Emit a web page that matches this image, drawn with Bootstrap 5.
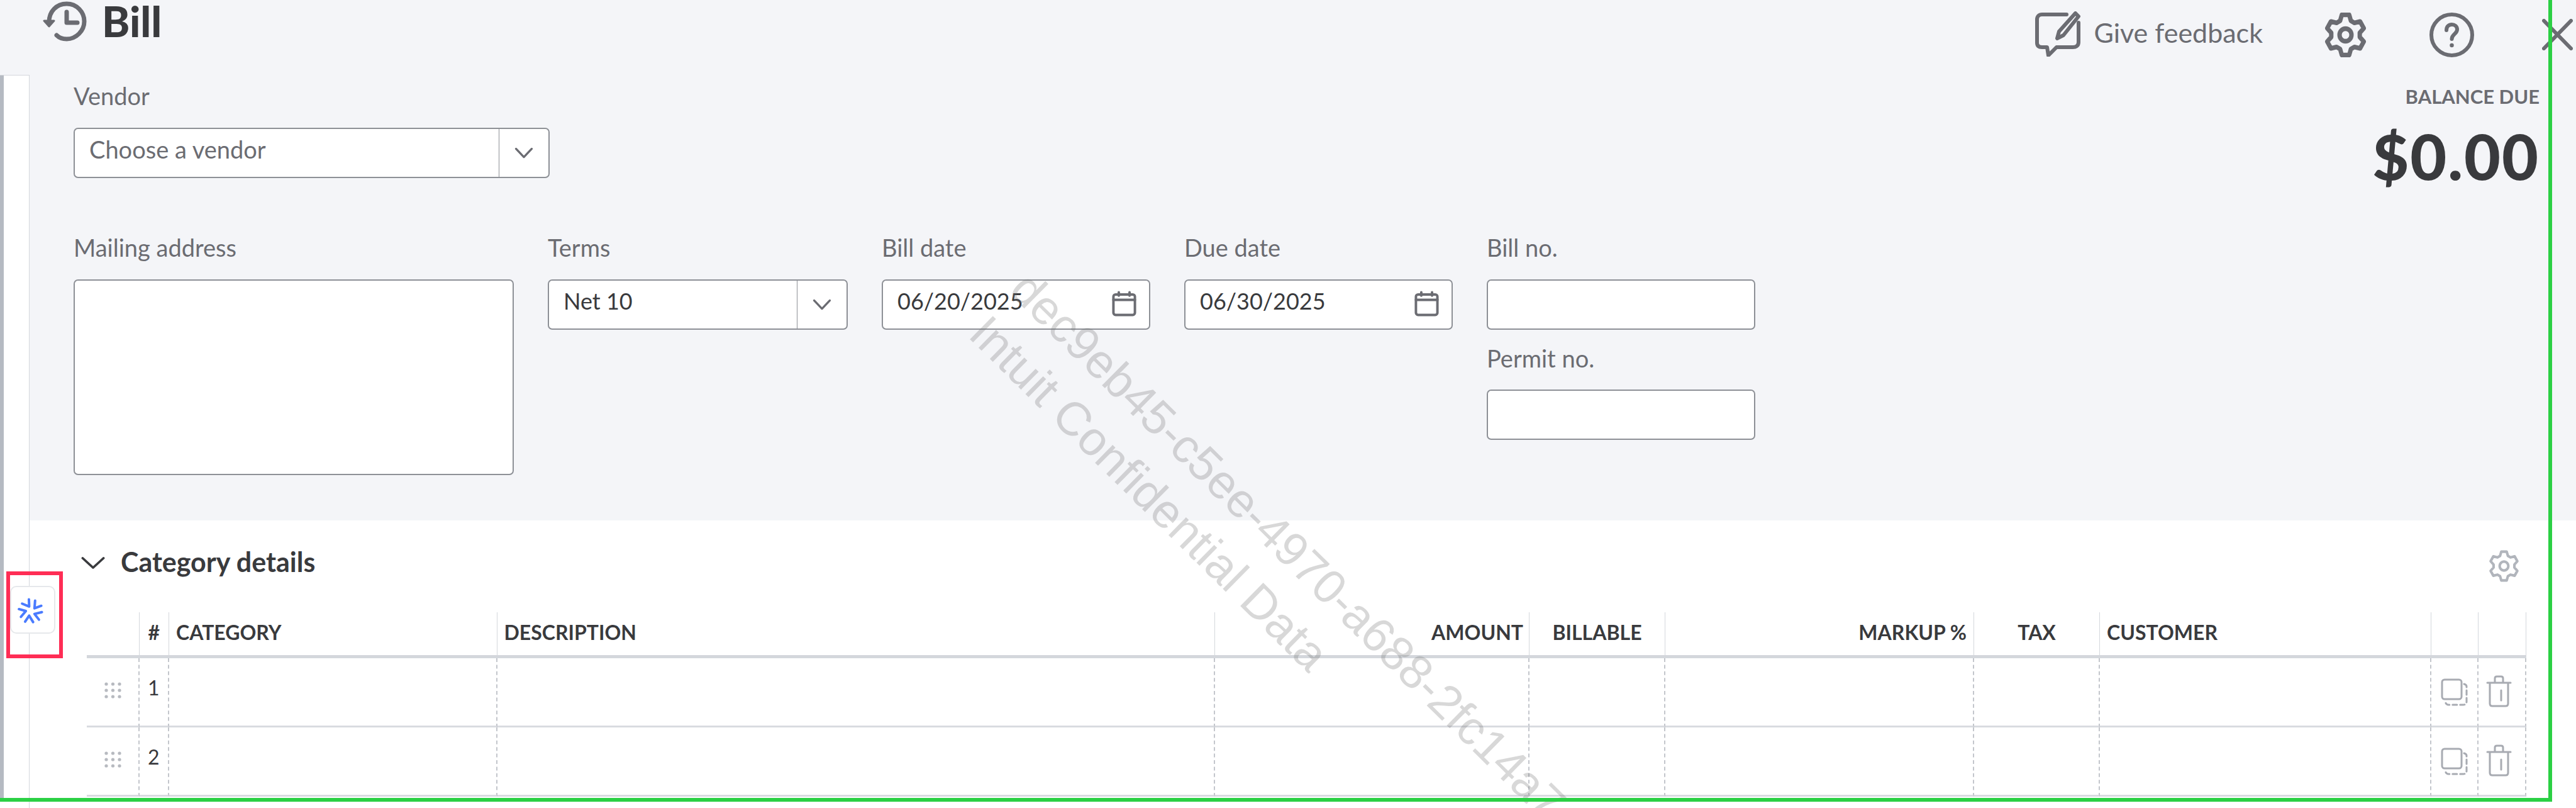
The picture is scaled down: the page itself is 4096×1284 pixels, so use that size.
<!doctype html>
<html lang="en">
<head>
<meta charset="utf-8">
<title>Bill</title>
<link href="https://cdn.jsdelivr.net/npm/bootstrap@5.3.0/dist/css/bootstrap.min.css" rel="stylesheet">
<style>
html,body{width:4096px;height:1284px;overflow:hidden;background:#fff}
body{font-family:"Lato","Liberation Sans",sans-serif;color:#393a3d;position:relative}
.ico{display:block;flex:none;fill:none;stroke:currentColor;stroke-linecap:round;stroke-linejoin:round}
.g6{color:#6b6c72}
.top-head{height:119px;background:#f4f5f8;padding-left:67px;padding-right:5px}
.i-hist{width:71px;height:64px;margin-top:2px}
.bill-title{font-size:67px;line-height:63px;font-weight:900;margin:2px 0 0 24px;color:#393a3d}
.i-fb{width:72px;height:72px;margin-top:18px}
.fb-text{font-size:43px;line-height:43px;margin:30px 98px 0 21px;color:#6b6c72}
.i-gear{width:67px;height:71px;margin-top:20px}
.i-help{width:71px;height:71px;margin:20px 108px 0 100px}
.i-x{width:49px;height:50px;margin-top:30px}
.strip{width:47px;flex:none;background:#fff;border-top:1px solid #d4d7dc;border-right:1px solid #d4d7dc;height:1165px}
.strip-bar{width:6px;height:1148px;background:#b5bac2}
.form-zone{height:708px;background:#f4f5f8;padding:15px 58px 0 70px}
.fld-label{font-size:38px;line-height:36px;color:#6b6c72}
.form-control.fld{height:80px;border:2px solid #8d9096;border-radius:7px;background:#fff;font-size:36px;line-height:36px;color:#393a3d;padding:0;box-shadow:none}
.fld-txt{padding:14px 0 0 23px;flex:1;min-width:0}
.ph{color:#6b6c72;font-size:38px}
.caret-box{width:79px;flex:none;border-left:1px solid #8d9096;height:100%;color:#6b6c72}
.i-chev{width:30px;height:18px}
.w-vendor{width:757px}
.balance{padding-top:4px}
.bal-label{font-size:31px;line-height:30px;font-weight:700;color:#6b6c72}
.bal-amt{font-size:100px;line-height:70px;font-weight:900;letter-spacing:2px;margin-top:44px;color:#393a3d}
.row-top{height:148px}
.row-mid{margin-top:93px;gap:54px}
.w-mail{width:700px}
.area{height:311px!important}
.w-terms{width:477px}
.w-date{width:427px}
.lab-gap{margin-bottom:33px}
.i-cal{width:41px;height:41px;margin:16px 19px 0 0;color:#6b6c72}
.permit{margin-top:27px}
.permit .fld-label{margin-bottom:32px}
.detail-zone{padding:47px 79px 0 91px;background:#fff}
.detail-head{height:99px;padding-right:11px}
.i-chev2{width:40px;height:21px;margin:10px 24px 0 -10px;color:#393a3d}
.detail-title{font-size:43px;line-height:38px;font-weight:700;color:#393a3d}
.i-gear2{width:49px;height:51px;color:#b1b5bc}
.table.bill-table{table-layout:fixed;width:3879px;margin:0;border-collapse:separate;border-spacing:0}
.table.bill-table>:not(caption)>*>*{padding:0;background:#fff;box-shadow:none;vertical-align:middle;color:#393a3d}
.table.bill-table>thead>tr>th{height:73px;font-size:32px;line-height:32px;font-weight:700;border-bottom:5px solid #d4d7dc;border-right:1px solid #d4d7dc;padding-bottom:4px}
.table.bill-table>tbody>tr>td{height:110px;border-bottom:3px solid #d9dbe0;border-right:2px dashed #c3c6cc;font-size:32px;line-height:32px}
.table.bill-table>thead>tr>th.pl{padding-left:11px}
.table.bill-table>thead>tr>th.pr{padding-right:9px}
.table.bill-table>thead>tr>th.pr2{padding-right:11px}
.c1{width:83.5px}.c2{width:47.5px}.c3{width:521.5px}.c4{width:1141.5px}.c5{width:500px}.c6{width:216px}.c7{width:491px}.c8{width:200px}.c9{width:527px}.c10{width:75px}.c11{width:76px}
.table.bill-table>tbody>tr>td.num{text-align:center;padding-bottom:14px}
.i-dots{width:27px;height:28px;margin:0 0 6px 28px;fill:#b7bac0;stroke:none}
.i-copy{width:43px;height:44px;margin:0 auto;color:#a8abb2}
.i-trash{width:41px;height:51px;margin:0 0 3px 12px;color:#a8abb2}
.assist{position:absolute;left:16px;top:931px;width:72px;height:76px;background:#fff;border:2px solid #e6e8eb;border-radius:10px;z-index:3}
.i-star{width:67px;height:61px;margin:6px 0 0 -2px;color:#4a7bff}
.red-box{position:absolute;left:10px;top:908px;width:90px;height:138px;border:6px solid #ff2d55;z-index:4}
.wm{position:absolute;font-family:"Liberation Sans",sans-serif;font-size:75.5px;line-height:78px;color:rgba(110,110,110,.27);white-space:nowrap;transform:rotate(44.6deg);transform-origin:0 0;z-index:5}
.wm-a{left:1648px;top:418px}
.wm-b{left:1583px;top:488px}
.frame{position:absolute;left:0;top:0;width:4058px;height:1274px;border-right:6px solid #2bd044;border-bottom:6px solid #2bd044;z-index:6}
</style>
</head>
<body>
<svg width="0" height="0" class="position-absolute">
  <symbol id="gear" viewBox="0 0 24 24" preserveAspectRatio="none">
    <path d="M8.93 4.4 9.9 1.2h4.2l.97 3.2 1.98 1.14 3.25-.76 2.1 3.64-2.28 2.44v2.28l2.28 2.44-2.1 3.64-3.25-.76-1.98 1.14-.97 3.2H9.9l-.97-3.2-1.98-1.14-3.25.76-2.1-3.64 2.28-2.44v-2.28L1.6 8.42l2.1-3.64 3.25.76z"/>
    <circle cx="12" cy="12" r="3.4"/>
  </symbol>
  <symbol id="chev" viewBox="0 0 36 22" preserveAspectRatio="none"><path d="M3 3 18 19 33 3"/></symbol>
  <symbol id="cal" viewBox="0 0 24 24"><rect x="2" y="3.5" width="20" height="19" rx="2"/><path d="M2 8.5h20M7 1.5v3M17 1.5v3"/></symbol>
  <symbol id="dots" viewBox="0 0 27 28"><circle cx="3" cy="4" r="2.6"/><circle cx="13.5" cy="4" r="2.6"/><circle cx="24" cy="4" r="2.6"/><circle cx="3" cy="14" r="2.6"/><circle cx="13.5" cy="14" r="2.6"/><circle cx="24" cy="14" r="2.6"/><circle cx="3" cy="24" r="2.6"/><circle cx="13.5" cy="24" r="2.6"/><circle cx="24" cy="24" r="2.6"/></symbol>
  <symbol id="copy" viewBox="0 0 43 44"><rect x="2" y="2" width="31" height="31" rx="4"/><path d="M37 9c2.500 .5 4 2 4 4v24c0 3-2 5-5 5H12c-2 0-3.500-1.200-4.500-3.500" stroke-dasharray="7 5"/></symbol>
  <symbol id="trash" viewBox="0 0 41 51"><path d="M2 12h37M14 12V5c0-2 1-3 3-3h7c2 0 3 1 3 3v7M6 12v33c0 2.500 1.500 4 4 4h21c2.500 0 4-1.500 4-4V12M24 24v16"/></symbol>
</svg>

<div class="top-head d-flex align-items-start">
  <svg class="ico i-hist g6" viewBox="0 0 71 64" stroke-width="7"><path d="M11 33C11 16 23 4 39 4s28 13 28 28-13 28-28 28c-7 0-12-2-16-6"/><path d="M39 17v17h17" stroke-width="7"/><path d="M3 31h16l-8 9z" fill="currentColor" stroke-width="3"/></svg>
  <div class="bill-title">Bill</div>
  <div class="d-flex align-items-start ms-auto">
    <svg class="ico i-fb g6" viewBox="0 0 72 72" stroke-width="6"><path d="M50 5H11C6 5 3 8 3 13v37c0 5 3 7 8 7h8l2 13 13-13h26c6 0 9-3 9-8V18"/><path d="M64 3l5 5-24 30-10 5 3-11z"/></svg>
    <div class="fb-text">Give feedback</div>
    <svg class="ico i-gear g6" stroke-width="2.500"><use href="#gear"/></svg>
    <svg class="ico i-help g6" viewBox="0 0 71 71" stroke-width="6"><circle cx="35.500" cy="35.500" r="32.500"/><path d="M27 28c0-6 4-9 8.500-9s8.500 3 8.500 8c0 7-8.500 7-8.500 15" stroke-width="6"/><circle cx="35.500" cy="52" r="2" fill="currentColor" stroke-width="2.500"/></svg>
    <svg class="ico i-x g6" viewBox="0 0 49 50" stroke-width="6"><path d="M3 3 46 47M46 3 3 47"/></svg>
  </div>
</div>

<div class="d-flex">
  <div class="strip"><div class="strip-bar"></div></div>
  <div class="flex-grow-1">
    <div class="form-zone">
      <div class="row-top d-flex justify-content-between align-items-start">
        <div class="w-vendor">
          <div class="fld-label lab-gap">Vendor</div>
          <div class="form-control fld d-flex"><div class="fld-txt ph">Choose a vendor</div><div class="caret-box d-flex align-items-center justify-content-center"><svg class="ico i-chev" stroke-width="4"><use href="#chev"/></svg></div></div>
        </div>
        <div class="balance text-end">
          <div class="bal-label">BALANCE DUE</div>
          <div class="bal-amt">$0.00</div>
        </div>
      </div>
      <div class="row-mid d-flex align-items-start">
        <div class="w-mail"><div class="fld-label lab-gap">Mailing address</div><div class="form-control fld area"></div></div>
        <div class="w-terms"><div class="fld-label lab-gap">Terms</div><div class="form-control fld d-flex"><div class="fld-txt">Net 10</div><div class="caret-box d-flex align-items-center justify-content-center"><svg class="ico i-chev" stroke-width="4"><use href="#chev"/></svg></div></div></div>
        <div class="w-date"><div class="fld-label lab-gap">Bill date</div><div class="form-control fld d-flex"><div class="fld-txt">06/20/2025</div><svg class="ico i-cal" stroke-width="2.300"><use href="#cal"/></svg></div></div>
        <div class="w-date"><div class="fld-label lab-gap">Due date</div><div class="form-control fld d-flex"><div class="fld-txt">06/30/2025</div><svg class="ico i-cal" stroke-width="2.300"><use href="#cal"/></svg></div></div>
        <div class="w-date"><div class="fld-label lab-gap">Bill no.</div><div class="form-control fld"></div>
          <div class="permit"><div class="fld-label">Permit no.</div><div class="form-control fld"></div></div>
        </div>
      </div>
    </div>
    <div class="detail-zone">
      <div class="detail-head d-flex align-items-start">
        <svg class="ico i-chev2" stroke-width="3.500" viewBox="0 0 36 22" preserveAspectRatio="none"><path d="M3 3 18 19 33 3"/></svg>
        <div class="detail-title">Category details</div>
        <svg class="ico i-gear2 ms-auto" stroke-width="2"><use href="#gear"/></svg>
      </div>
      <table class="table bill-table">
        <colgroup><col class="c1"><col class="c2"><col class="c3"><col class="c4"><col class="c5"><col class="c6"><col class="c7"><col class="c8"><col class="c9"><col class="c10"><col class="c11"></colgroup>
        <thead><tr>
          <th></th><th class="text-center">#</th><th class="pl">CATEGORY</th><th class="pl">DESCRIPTION</th><th class="pr text-end">AMOUNT</th><th class="text-center">BILLABLE</th><th class="pr2 text-end">MARKUP %</th><th class="text-center">TAX</th><th class="pl">CUSTOMER</th><th></th><th></th>
        </tr></thead>
        <tbody>
          <tr><td><svg class="ico i-dots"><use href="#dots"/></svg></td><td class="num">1</td><td></td><td></td><td></td><td></td><td></td><td></td><td></td><td><svg class="ico i-copy" stroke-width="3"><use href="#copy"/></svg></td><td><svg class="ico i-trash" stroke-width="3"><use href="#trash"/></svg></td></tr>
          <tr><td><svg class="ico i-dots"><use href="#dots"/></svg></td><td class="num">2</td><td></td><td></td><td></td><td></td><td></td><td></td><td></td><td><svg class="ico i-copy" stroke-width="3"><use href="#copy"/></svg></td><td><svg class="ico i-trash" stroke-width="3"><use href="#trash"/></svg></td></tr>
        </tbody>
      </table>
    </div>
  </div>
</div>

<div class="assist"><svg class="ico i-star" viewBox="0 0 84 76" stroke-width="5"><g transform="translate(41 40)"><path d="M-11 21-3 9 5 22"/><path d="M-11 21-3 9 5 22" transform="rotate(72)"/><path d="M-11 21-3 9 5 22" transform="rotate(144)"/><path d="M-11 21-3 9 5 22" transform="rotate(216)"/><path d="M-11 21-3 9 5 22" transform="rotate(288)"/></g></svg></div>
<div class="red-box"></div>
<div class="wm wm-a">dec9eb45-c5ee-4970-a688-2fc14a7</div>
<div class="wm wm-b">Intuit Confidential Data</div>
<div class="frame"></div>
</body>
</html>
